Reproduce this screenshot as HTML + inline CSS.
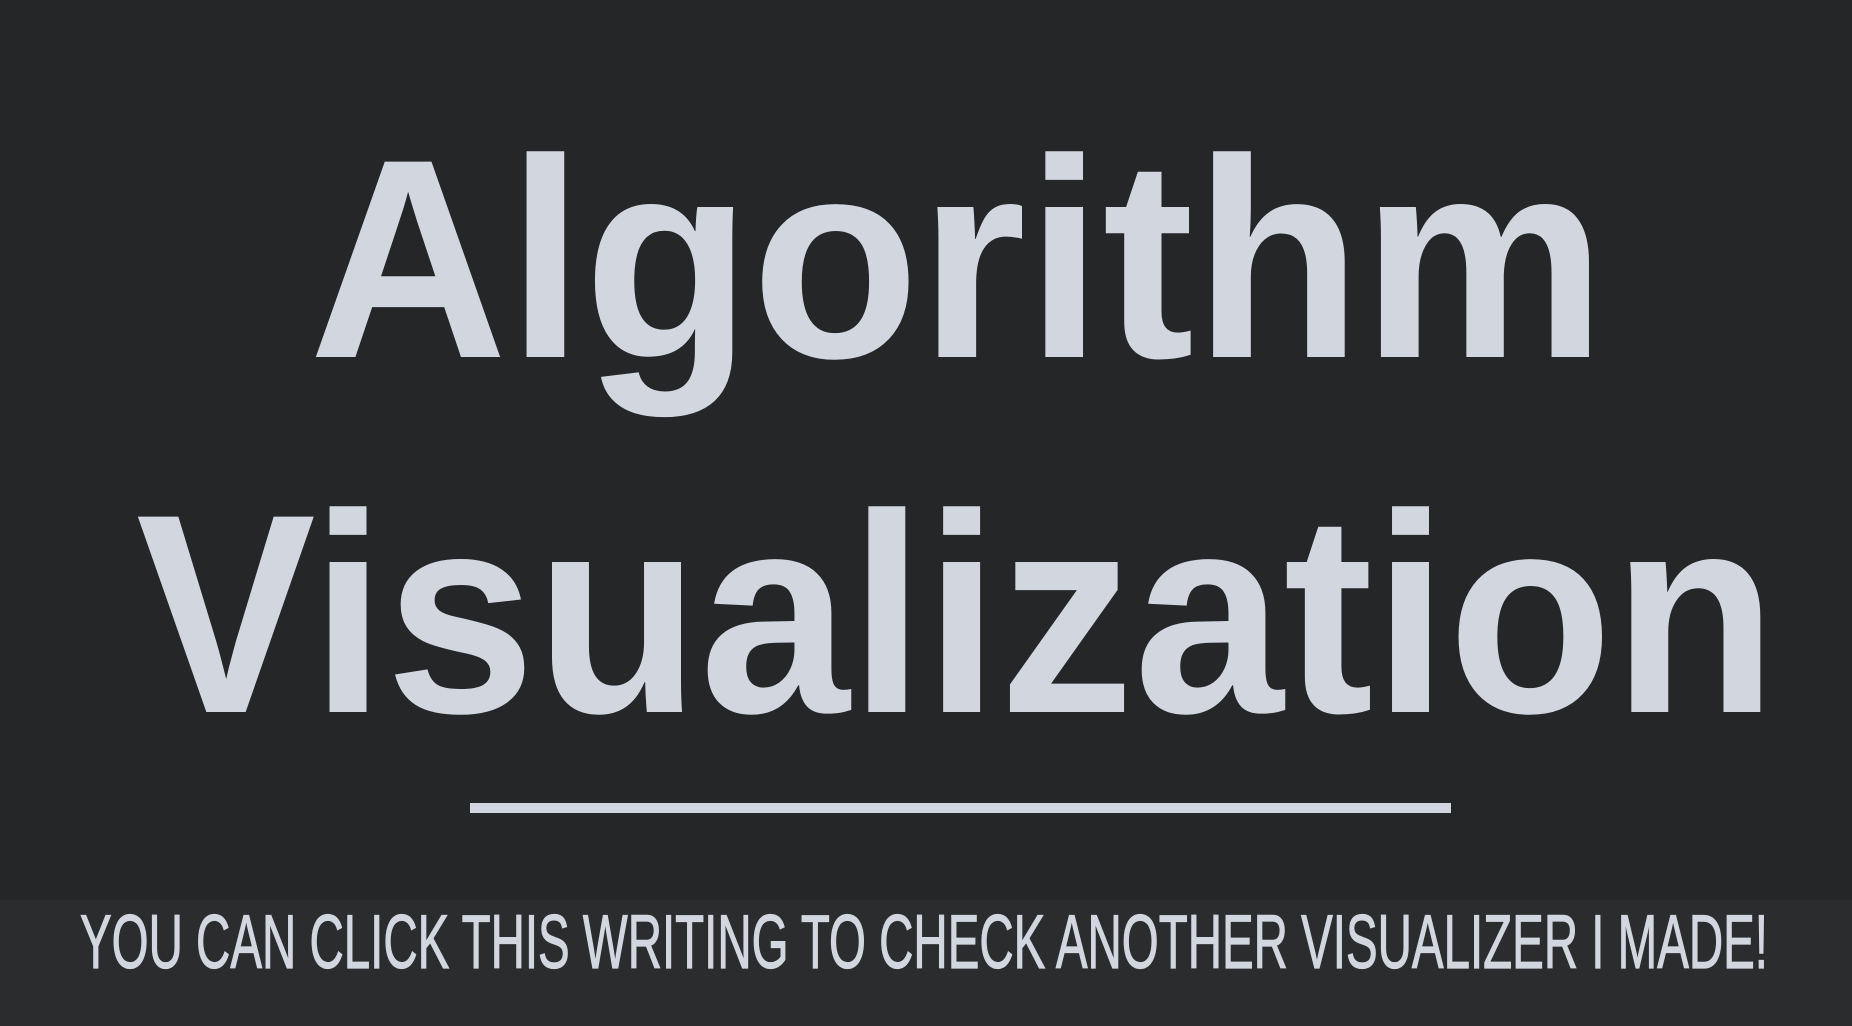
<!DOCTYPE html>
<html><head><meta charset="utf-8"><style>
html,body{margin:0;padding:0;background:#252628;}
svg{display:block;}
</style></head><body>
<svg width="1852" height="1026" viewBox="0 0 1852 1026" xmlns="http://www.w3.org/2000/svg">
<rect x="0" y="0" width="1852" height="1026" fill="#252628"/>
<rect x="0" y="900" width="1852" height="126" fill="#2b2c2e"/>
<g fill="#d2d7df" font-family="'Liberation Sans', sans-serif">
<text x="309" y="357" font-size="284" font-weight="bold" textLength="1297" lengthAdjust="spacingAndGlyphs">Algorithm</text>
<text x="136" y="712" font-size="284" font-weight="bold" textLength="1641" lengthAdjust="spacingAndGlyphs">Visualization</text>
<text x="80" y="968" font-size="76" stroke="#d2d7df" stroke-width="1.2" textLength="1688" lengthAdjust="spacingAndGlyphs">YOU CAN CLICK THIS WRITING TO CHECK ANOTHER VISUALIZER I MADE!</text>
</g>
<rect x="470" y="803" width="981" height="10" fill="#d2d7df"/>
</svg>
</body></html>
